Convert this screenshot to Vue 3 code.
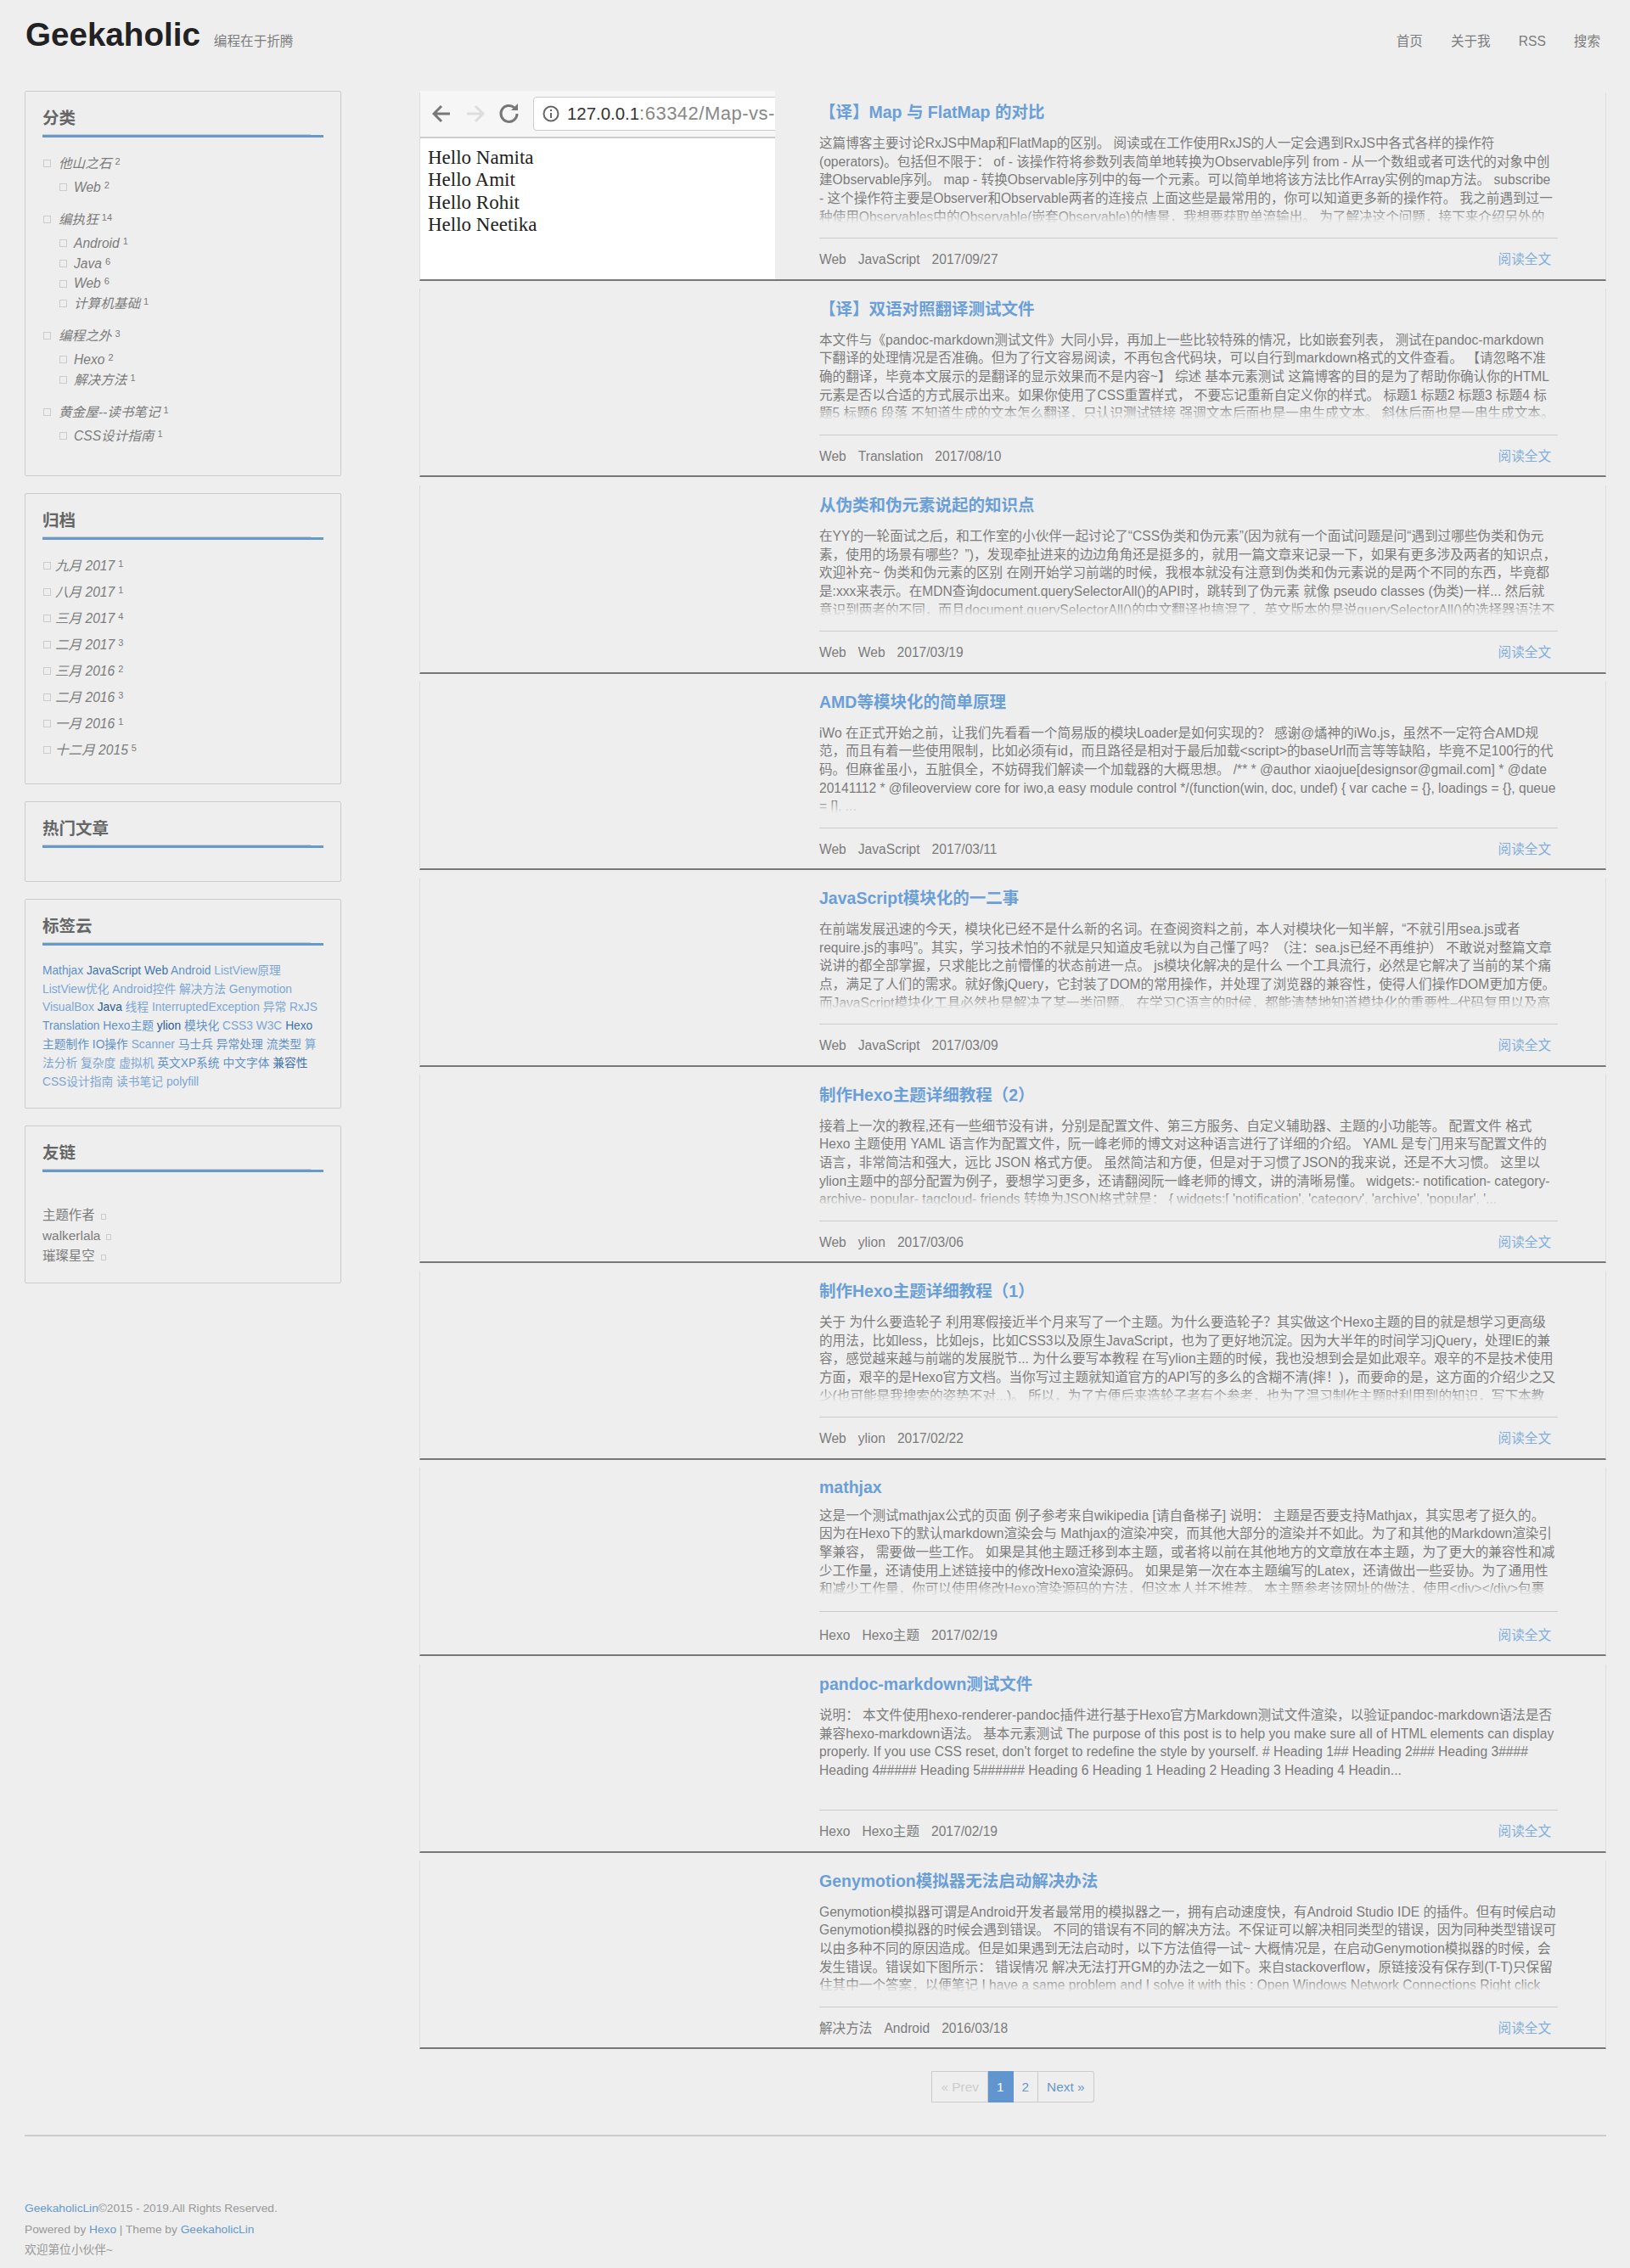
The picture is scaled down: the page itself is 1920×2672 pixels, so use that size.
<template>
  <div class="page">
    <header class="site-head">
      <h1 class="logo">Geekaholic</h1>
      <span class="slogan">编程在于折腾</span>
      <nav class="nav">
        <a v-for="link in navLinks" :key="link">{{ link }}</a>
      </nav>
    </header>

    <div class="columns">
      <aside class="sidebar">
        <section class="widget">
          <h3 class="widget-title">分类</h3>
          <ul class="cat-list">
            <li v-for="cat in categories" :key="cat.name" class="cat-item">
              <div class="row"><i class="tofu"></i><em>{{ cat.name }}</em><sup>{{ cat.count }}</sup></div>
              <ul class="cat-sub">
                <li v-for="sub in cat.children" :key="sub.name" class="row">
                  <i class="tofu"></i><em>{{ sub.name }}</em><sup>{{ sub.count }}</sup>
                </li>
              </ul>
            </li>
          </ul>
        </section>

        <section class="widget">
          <h3 class="widget-title">归档</h3>
          <ul class="archive-list">
            <li v-for="item in archives" :key="item.name" class="row">
              <i class="tofu"></i><em>{{ item.name }}</em><sup>{{ item.count }}</sup>
            </li>
          </ul>
        </section>

        <section class="widget">
          <h3 class="widget-title">热门文章</h3>
          <div class="popular"></div>
        </section>

        <section class="widget">
          <h3 class="widget-title">标签云</h3>
          <div class="tags">
            <template v-for="tag in tags" :key="tag.name">
              <a :style="{ color: tag.color }">{{ tag.name }}</a>{{ ' ' }}
            </template>
          </div>
        </section>

        <section class="widget">
          <h3 class="widget-title">友链</h3>
          <ul class="friends">
            <li v-for="name in friends" :key="name">{{ name }}<i class="tofu small"></i></li>
          </ul>
        </section>
      </aside>

      <main class="main">
        <article v-for="(post, index) in posts" :key="index" class="post">
          <div class="thumb">
            <div v-if="index === 0" class="shot">
              <div class="shot-bar">
                <svg class="shot-icons" width="118" height="30" viewBox="0 0 118 30" fill="none" stroke-width="3">
                  <path d="M21 15H3M11 6l-9 9 9 9" stroke="#777" />
                  <path d="M41 15h18M51 6l9 9-9 9" stroke="#ddd" />
                  <path d="M100 15a9.5 9.5 0 1 1-3-7" stroke="#777" />
                  <path d="M101 3v8h-8z" fill="#777" stroke="none" />
                </svg>
                <div class="shot-url">
                  <svg width="20" height="20" viewBox="0 0 20 20" fill="none">
                    <circle cx="10" cy="10" r="8.5" stroke="#666" stroke-width="2" />
                    <path d="M10 9v6M10 5v2" stroke="#666" stroke-width="2" />
                  </svg>
                  <span><b>127.0.0.1</b>:63342/Map-vs-FlatMap/index.html</span>
                </div>
              </div>
              <div class="shot-body">
                <div>Hello Namita</div>
                <div>Hello Amit</div>
                <div>Hello Rohit</div>
                <div>Hello Neetika</div>
              </div>
            </div>
          </div>
          <div class="post-main" :class="{ nudged: post.nudged }">
            <h2 class="post-title">{{ post.title }}</h2>
            <p class="excerpt">{{ post.excerpt }}</p>
            <div class="post-meta">
              <span>{{ post.category }}</span>
              <span>{{ post.tag }}</span>
              <span>{{ post.date }}</span>
              <a class="more">阅读全文</a>
            </div>
          </div>
        </article>

        <div class="pager">
          <span class="page-cell disabled">« Prev</span>
          <span class="page-cell active">1</span>
          <a class="page-cell">2</a>
          <a class="page-cell">Next »</a>
        </div>
      </main>
    </div>

    <footer class="site-foot">
      <p><a>GeekaholicLin</a>©2015 - 2019.All Rights Reserved.</p>
      <p>Powered by <a>Hexo</a> | Theme by <a>GeekaholicLin</a></p>
      <p>欢迎第位小伙伴~</p>
    </footer>
  </div>
</template>

<script setup>
const navLinks = ['首页', '关于我', 'RSS', '搜索'];

const categories = [
  { name: '他山之石', count: 2, children: [{ name: 'Web', count: 2 }] },
  {
    name: '编执狂',
    count: 14,
    children: [
      { name: 'Android', count: 1 },
      { name: 'Java', count: 6 },
      { name: 'Web', count: 6 },
      { name: '计算机基础', count: 1 },
    ],
  },
  {
    name: '编程之外',
    count: 3,
    children: [
      { name: 'Hexo', count: 2 },
      { name: '解决方法', count: 1 },
    ],
  },
  { name: '黄金屋--读书笔记', count: 1, children: [{ name: 'CSS设计指南', count: 1 }] },
];

const archives = [
  { name: '九月 2017', count: 1 },
  { name: '八月 2017', count: 1 },
  { name: '三月 2017', count: 4 },
  { name: '二月 2017', count: 3 },
  { name: '三月 2016', count: 2 },
  { name: '二月 2016', count: 3 },
  { name: '一月 2016', count: 1 },
  { name: '十二月 2015', count: 5 },
];

const light = '#7ba6d6';
const mid = '#5f92c9';
const dark = '#3f74ae';
const darkest = '#2b5b94';

const tags = [
  { name: 'Mathjax', color: mid },
  { name: 'JavaScript', color: dark },
  { name: 'Web', color: dark },
  { name: 'Android', color: mid },
  { name: 'ListView原理', color: light },
  { name: 'ListView优化', color: light },
  { name: 'Android控件', color: light },
  { name: '解决方法', color: light },
  { name: 'Genymotion', color: light },
  { name: 'VisualBox', color: light },
  { name: 'Java', color: darkest },
  { name: '线程', color: light },
  { name: 'InterruptedException', color: light },
  { name: '异常', color: light },
  { name: 'RxJS', color: light },
  { name: 'Translation', color: mid },
  { name: 'Hexo主题', color: mid },
  { name: 'ylion', color: darkest },
  { name: '模块化', color: mid },
  { name: 'CSS3', color: light },
  { name: 'W3C', color: light },
  { name: 'Hexo', color: dark },
  { name: '主题制作', color: mid },
  { name: 'IO操作', color: mid },
  { name: 'Scanner', color: light },
  { name: '马士兵', color: mid },
  { name: '异常处理', color: mid },
  { name: '流类型', color: mid },
  { name: '算法分析', color: light },
  { name: '复杂度', color: light },
  { name: '虚拟机', color: light },
  { name: '英文XP系统', color: mid },
  { name: '中文字体', color: mid },
  { name: '兼容性', color: dark },
  { name: 'CSS设计指南', color: light },
  { name: '读书笔记', color: light },
  { name: 'polyfill', color: light },
];

const friends = ['主题作者', 'walkerlala', '璀璨星空'];

const posts = [
  {
    title: '【译】Map 与 FlatMap 的对比',
    excerpt: '这篇博客主要讨论RxJS中Map和FlatMap的区别。 阅读或在工作使用RxJS的人一定会遇到RxJS中各式各样的操作符(operators)。包括但不限于： of - 该操作符将参数列表简单地转换为Observable序列 from - 从一个数组或者可迭代的对象中创建Observable序列。 map - 转换Observable序列中的每一个元素。可以简单地将该方法比作Array实例的map方法。 subscribe - 这个操作符主要是Observer和Observable两者的连接点 上面这些是最常用的，你可以知道更多新的操作符。 我之前遇到过一种使用Observables中的Observable(嵌套Observable)的情景，我想要获取单流输出。 为了解决这个问题，接下来介绍另外的有',
    category: 'Web',
    tag: 'JavaScript',
    date: '2017/09/27',
  },
  {
    title: '【译】双语对照翻译测试文件',
    excerpt: '本文件与《pandoc-markdown测试文件》大同小异，再加上一些比较特殊的情况，比如嵌套列表， 测试在pandoc-markdown下翻译的处理情况是否准确。但为了行文容易阅读，不再包含代码块，可以自行到markdown格式的文件查看。 【请忽略不准确的翻译，毕竟本文展示的是翻译的显示效果而不是内容~】 综述 基本元素测试 这篇博客的目的是为了帮助你确认你的HTML元素是否以合适的方式展示出来。如果你使用了CSS重置样式， 不要忘记重新自定义你的样式。 标题1 标题2 标题3 标题4 标题5 标题6 段落 不知道生成的文本怎么翻译，只认识测试链接 强调文本后面也是一串生成文本。 斜体后面也是一串生成文本。',
    category: 'Web',
    tag: 'Translation',
    date: '2017/08/10',
  },
  {
    title: '从伪类和伪元素说起的知识点',
    excerpt: '在YY的一轮面试之后，和工作室的小伙伴一起讨论了“CSS伪类和伪元素”(因为就有一个面试问题是问“遇到过哪些伪类和伪元素，使用的场景有哪些？”)，发现牵扯进来的边边角角还是挺多的，就用一篇文章来记录一下，如果有更多涉及两者的知识点，欢迎补充~ 伪类和伪元素的区别 在刚开始学习前端的时候，我根本就没有注意到伪类和伪元素说的是两个不同的东西，毕竟都是:xxx来表示。在MDN查询document.querySelectorAll()的API时，跳转到了伪元素 就像 pseudo classes (伪类)一样... 然后就意识到两者的不同，而且document.querySelectorAll()的中文翻译也搞混了，英文版本的是说querySelectorAll()的选择器语法不',
    category: 'Web',
    tag: 'Web',
    date: '2017/03/19',
  },
  {
    title: 'AMD等模块化的简单原理',
    excerpt: 'iWo 在正式开始之前，让我们先看看一个简易版的模块Loader是如何实现的？ 感谢@燏神的iWo.js，虽然不一定符合AMD规范，而且有着一些使用限制，比如必须有id，而且路径是相对于最后加载<script>的baseUrl而言等等缺陷，毕竟不足100行的代码。但麻雀虽小，五脏俱全，不妨碍我们解读一个加载器的大概思想。 /** * @author xiaojue[designsor@gmail.com] * @date 20141112 * @fileoverview core for iwo,a easy module control */(function(win, doc, undef) { var cache = {}, loadings = {}, queue = [], ...',
    category: 'Web',
    tag: 'JavaScript',
    date: '2017/03/11',
  },
  {
    title: 'JavaScript模块化的一二事',
    excerpt: '在前端发展迅速的今天，模块化已经不是什么新的名词。在查阅资料之前，本人对模块化一知半解，“不就引用sea.js或者require.js的事吗”。其实，学习技术怕的不就是只知道皮毛就以为自己懂了吗？（注：sea.js已经不再维护） 不敢说对整篇文章说讲的都全部掌握，只求能比之前懵懂的状态前进一点。 js模块化解决的是什么 一个工具流行，必然是它解决了当前的某个痛点，满足了人们的需求。就好像jQuery，它封装了DOM的常用操作，并处理了浏览器的兼容性，使得人们操作DOM更加方便。而JavaScript模块化工具必然也是解决了某一类问题。 在学习C语言的时候，都能清楚地知道模块化的重要性–代码复用以及高',
    category: 'Web',
    tag: 'JavaScript',
    date: '2017/03/09',
  },
  {
    title: '制作Hexo主题详细教程（2）',
    excerpt: '接着上一次的教程,还有一些细节没有讲，分别是配置文件、第三方服务、自定义辅助器、主题的小功能等。 配置文件 格式 Hexo 主题使用 YAML 语言作为配置文件，阮一峰老师的博文对这种语言进行了详细的介绍。 YAML 是专门用来写配置文件的语言，非常简洁和强大，远比 JSON 格式方便。 虽然简洁和方便，但是对于习惯了JSON的我来说，还是不大习惯。 这里以ylion主题中的部分配置为例子，要想学习更多，还请翻阅阮一峰老师的博文，讲的清晰易懂。 widgets:- notification- category-archive- popular- tagcloud- friends 转换为JSON格式就是： { widgets:[ \'notification\', \'category\', \'archive\', \'popular\', \'...',
    category: 'Web',
    tag: 'ylion',
    date: '2017/03/06',
  },
  {
    title: '制作Hexo主题详细教程（1）',
    excerpt: '关于 为什么要造轮子 利用寒假接近半个月来写了一个主题。为什么要造轮子？其实做这个Hexo主题的目的就是想学习更高级的用法，比如less，比如ejs，比如CSS3以及原生JavaScript，也为了更好地沉淀。因为大半年的时间学习jQuery，处理IE的兼容，感觉越来越与前端的发展脱节... 为什么要写本教程 在写ylion主题的时候，我也没想到会是如此艰辛。艰辛的不是技术使用方面，艰辛的是Hexo官方文档。当你写过主题就知道官方的API写的多么的含糊不清(摔！)，而要命的是，这方面的介绍少之又少(也可能是我搜索的姿势不对...)。 所以，为了方便后来造轮子者有个参考，也为了温习制作主题时利用到的知识，写下本教',
    category: 'Web',
    tag: 'ylion',
    date: '2017/02/22',
  },
  {
    title: 'mathjax',
    excerpt: '这是一个测试mathjax公式的页面 例子参考来自wikipedia [请自备梯子] 说明： 主题是否要支持Mathjax，其实思考了挺久的。因为在Hexo下的默认markdown渲染会与 Mathjax的渲染冲突，而其他大部分的渲染并不如此。为了和其他的Markdown渲染引擎兼容， 需要做一些工作。 如果是其他主题迁移到本主题，或者将以前在其他地方的文章放在本主题，为了更大的兼容性和减少工作量，还请使用上述链接中的修改Hexo渲染源码。 如果是第一次在本主题编写的Latex，还请做出一些妥协。为了通用性和减少工作量，你可以使用修改Hexo渲染源码的方法，但这本人并不推荐。 本主题参考该网址的做法，使用<div></div>包裹',
    category: 'Hexo',
    tag: 'Hexo主题',
    date: '2017/02/19',
    nudged: true,
  },
  {
    title: 'pandoc-markdown测试文件',
    excerpt: '说明： 本文件使用hexo-renderer-pandoc插件进行基于Hexo官方Markdown测试文件渲染，以验证pandoc-markdown语法是否兼容hexo-markdown语法。 基本元素测试 The purpose of this post is to help you make sure all of HTML elements can display properly. If you use CSS reset, don\'t forget to redefine the style by yourself. # Heading 1## Heading 2### Heading 3#### Heading 4##### Heading 5###### Heading 6 Heading 1 Heading 2 Heading 3 Heading 4 Headin...',
    category: 'Hexo',
    tag: 'Hexo主题',
    date: '2017/02/19',
  },
  {
    title: 'Genymotion模拟器无法启动解决办法',
    excerpt: 'Genymotion模拟器可谓是Android开发者最常用的模拟器之一，拥有启动速度快，有Android Studio IDE 的插件。但有时候启动Genymotion模拟器的时候会遇到错误。 不同的错误有不同的解决方法。不保证可以解决相同类型的错误，因为同种类型错误可以由多种不同的原因造成。但是如果遇到无法启动时，以下方法值得一试~ 大概情况是，在启动Genymotion模拟器的时候，会发生错误。错误如下图所示： 错误情况 解决无法打开GM的办法之一如下。来自stackoverflow，原链接没有保存到(T-T)只保留住其中一个答案，以便笔记 I have a same problem and I solve it with this : Open Windows Network Connections Right click',
    category: '解决方法',
    tag: 'Android',
    date: '2016/03/18',
  },
];
</script>

<style>
html,
body {
  margin: 0;
  background: #eeeeee;
}
</style>

<style scoped>
.page {
  height: 2672px;
  box-sizing: border-box;
  padding: 0 28px 0 29px;
  overflow: hidden;
  font-family: "Liberation Sans", "Noto Sans CJK SC", sans-serif;
  font-size: 15.6px;
  color: #7c7c7c;
  background: #eee;
}

/* header */
.site-head {
  display: flex;
  align-items: baseline;
  height: 107px;
  box-sizing: border-box;
  padding: 16px 7px 0 1px;
}

.logo {
  margin: 0;
  font-size: 38.6px;
  line-height: 50px;
  font-weight: 700;
  color: #222;
}

.slogan {
  margin-left: 16px;
}

.nav {
  display: flex;
  align-items: baseline;
  gap: 33px;
  margin-left: auto;
}

/* sidebar */
.columns {
  display: flex;
}

.sidebar {
  flex: 0 0 373px;
  display: flex;
  flex-direction: column;
  gap: 20px;
}

.widget {
  border: 1px solid #ccc;
  border-radius: 2px;
  padding: 20px;
}

.widget-title {
  margin: 0;
  border-bottom: 3px solid #6699cc;
  font-size: 19.5px;
  line-height: 22px;
  font-weight: 700;
  color: #666;
}

.widget-title::after {
  content: "";
  display: block;
  width: 316px;
  height: 1px;
  margin-top: 8px;
  background: #ccc;
}

ul {
  margin: 0;
  padding: 0;
  list-style: none;
}

.row {
  display: flex;
  align-items: center;
  line-height: 23.7px;
}

.row em {
  margin-left: 9px;
}

.row sup {
  margin-left: 4px;
  font-size: 11px;
  line-height: 10px;
  align-self: flex-start;
  margin-top: 4px;
}

.tofu {
  flex: none;
  display: inline-block;
  width: 7px;
  height: 7px;
  margin-left: 1px;
  border: 1px solid #ccc;
}

.tofu.small {
  width: 4px;
  height: 5px;
  margin-left: 7px;
}

.cat-list {
  margin-top: 19px;
}

.cat-item {
  margin-bottom: 14.3px;
}

.cat-sub {
  margin-top: 4.3px;
}

.cat-sub .row {
  padding-left: 19px;
}

.cat-sub .row em {
  margin-left: 8px;
}

.archive-list {
  margin-top: 19px;
}

.archive-list .row {
  margin-bottom: 7.3px;
}

.archive-list .row em {
  margin-left: 5px;
}

.popular {
  height: 19px;
}

.tags {
  margin-top: 19px;
  margin-bottom: -0.5px;
  font-size: 13.75px;
  line-height: 21.8px;
}

.friends {
  margin-top: 39.5px;
  font-size: 15.4px;
  line-height: 23.6px;
}

/* posts */
.main {
  flex: 1;
  min-width: 0;
  margin-left: 92px;
  padding-top: 1.5px;
}

.post {
  display: grid;
  grid-template-columns: 418px 1fr;
  box-sizing: border-box;
  height: 222px;
  margin-bottom: 9.5px;
  border: 1px solid #ddd;
  border-top: 0;
  border-bottom: 2px solid #777;
}

.thumb {
  min-width: 0;
}

.shot {
  display: flex;
  flex-direction: column;
  height: calc(100% + 2px);
  margin-top: -2px;
  background: #fff;
}

.shot-bar {
  flex: none;
  display: flex;
  align-items: center;
  height: 54px;
  padding-left: 14px;
  background: #f6f6f6;
  border-bottom: 2px solid #ccc;
  overflow: hidden;
}

.shot-icons {
  flex: none;
}

.shot-url {
  display: flex;
  align-items: center;
  flex: none;
  gap: 9px;
  height: 38px;
  margin-left: 1px;
  padding: 0 10px;
  background: #fff;
  border: 1px solid #ccc;
  border-radius: 4px;
  font-size: 22px;
  letter-spacing: 0.5px;
  color: #888;
  white-space: nowrap;
}

.shot-url b {
  font-size: 20.4px;
  font-weight: 400;
  letter-spacing: 0;
  color: #333;
}

.shot-body {
  flex: 1;
  padding: 10px 9px;
  font-family: "Liberation Serif", serif;
  font-size: 23px;
  line-height: 26.5px;
  color: #222;
}

.post-main {
  min-width: 0;
  padding: 9.5px 56px 0 52px;
}

.post-title {
  margin: 0;
  font-size: 19.5px;
  line-height: 28px;
  font-weight: 700;
  color: #6a9fd8;
}

.excerpt {
  position: relative;
  height: 105px;
  margin: 12px 0 17px;
  padding-right: 1px;
  overflow: hidden;
  line-height: 21.7px;
}

.excerpt::after {
  content: "";
  position: absolute;
  left: 0;
  right: 0;
  bottom: 0;
  height: 16px;
  background: linear-gradient(rgba(238, 238, 238, 0), #eee);
}

.post-meta {
  display: flex;
  gap: 14px;
  padding: 14px 8px 0 0;
  border-top: 1px solid #ccc;
  line-height: 22px;
}

.more {
  margin-left: auto;
  color: #82aedd;
}

/* this post sits a few px higher in the original */
.nudged {
  padding-top: 8.5px;
}

.nudged .excerpt {
  margin: 9px 0 18px;
}

.nudged .post-meta {
  padding-top: 17px;
}

/* pagination */
.pager {
  display: flex;
  justify-content: center;
  margin-top: 26px;
  line-height: 35px;
  font-size: 15.4px;
  color: #6699cc;
}

.page-cell {
  padding: 0 10px;
  border: 1px solid #ccc;
  border-left: 0;
}

.page-cell:first-child {
  border-left: 1px solid #ccc;
}

.page-cell:last-child {
  border-radius: 0 3px 3px 0;
}

.disabled {
  color: #ccc;
}

.active {
  color: #fff;
  background: #6195cf;
  border-color: #6195cf;
}

/* footer */
.site-foot {
  margin-top: 38px;
  padding-top: 73px;
  border-top: 2px solid #ccc;
  font-size: 13.7px;
  line-height: 24.6px;
  color: #999;
}

.site-foot p {
  margin: 0;
}

.site-foot a {
  color: #6699cc;
}
</style>
